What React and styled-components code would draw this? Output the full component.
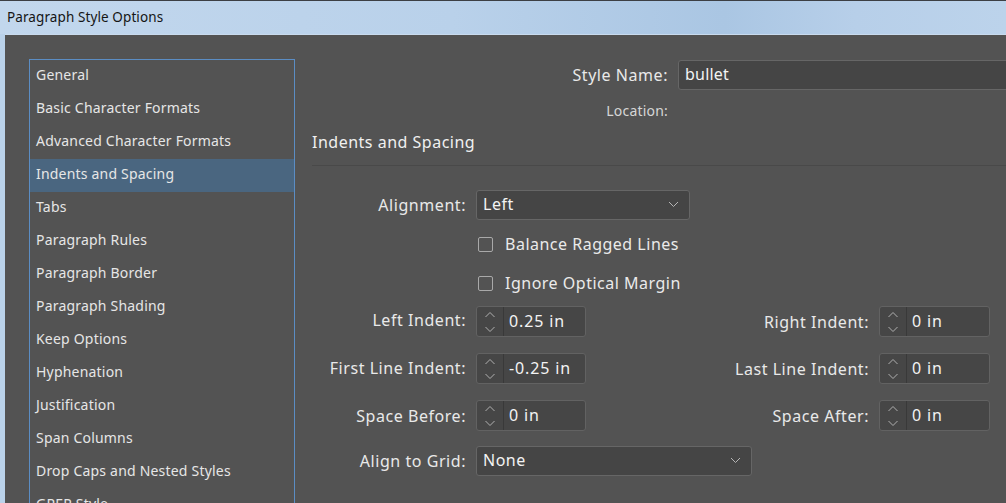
import React from 'react';
import styled, { createGlobalStyle } from 'styled-components';

const GlobalStyle = createGlobalStyle`
  html, body {
    margin: 0;
    padding: 0;
    background: #535353;
  }
  body {
    font-family: "Noto Sans", "DejaVu Sans", sans-serif;
    overflow: hidden;
  }
`;

const Window = styled.div`
  width: 1006px;
  height: 503px;
  display: flex;
  flex-direction: column;
  overflow: hidden;
`;

const TitleBar = styled.div`
  height: 34px;
  box-sizing: border-box;
  border-top: 1px solid #3c3f44;
  background: linear-gradient(90deg, #c2d7ed 0%, #b9d1ea 45%, #aac6e3 72%, #b7cfe9 85%, #bcd3eb 100%);
  display: flex;
  align-items: center;
  padding: 0 0 1px 7px;
  font-size: 13.5px;
  letter-spacing: 0.1px;
  color: #151515;
`;

const Frame = styled.div`
  flex: 1;
  display: flex;
  min-height: 0;
  padding-left: 5px;
  background: #bad2ea;
`;

const Body = styled.div`
  flex: 1;
  display: flex;
  gap: 17px;
  min-height: 0;
  padding: 24px 0 0 24px;
  background: #535353;
  border-top: 1px solid #c9dbee;
  overflow: hidden;
`;

const CategoryList = styled.ul`
  list-style: none;
  margin: 0;
  padding: 0;
  width: 266px;
  flex-shrink: 0;
  box-sizing: border-box;
  border: 1px solid #5b8dc4;
  border-bottom: none;
  overflow: hidden;
`;

const Category = styled.li`
  height: 33px;
  display: flex;
  align-items: center;
  padding: 0 0 4px 6px;
  box-sizing: border-box;
  font-size: 14px;
  letter-spacing: 0.2px;
  color: #e6e6e6;
  white-space: nowrap;
  background: ${(p) => (p.$active ? '#4a6680' : 'transparent')};
`;

const Panel = styled.div`
  flex: 1;
  min-width: 0;
  display: flex;
  flex-direction: column;
  padding-top: 1px;
  letter-spacing: 0.5px;
`;

const NameRow = styled.div`
  display: grid;
  grid-template-columns: 356px 1fr;
  column-gap: 10px;
  align-items: center;
  height: ${(p) => p.$height}px;
  margin-top: ${(p) => p.$top || 0}px;
`;

const Label = styled.span`
  text-align: right;
  font-size: ${(p) => p.$size || 16}px;
  letter-spacing: ${(p) => (p.$size ? 0.2 : 0.55)}px;
  color: ${(p) => (p.$dim ? '#d6d6d6' : '#e9e9e9')};
  white-space: nowrap;
  transform: translateY(${(p) => p.$shift || 0}px);
`;

const TextInput = styled.div`
  height: 30px;
  box-sizing: border-box;
  margin-right: -12px;
  display: flex;
  align-items: center;
  padding: 0 6px 2px;
  background: #454545;
  border: 1px solid #666;
  border-radius: 3px;
  font-size: 16px;
  letter-spacing: 0.2px;
  color: #f3f3f3;
`;

const SectionTitle = styled.div`
  margin-top: 10px;
  font-size: 16px;
  line-height: 22px;
  color: #f0f0f0;
`;

const Divider = styled.div`
  margin-top: 12px;
  height: 1px;
  background: #494949;
`;

const Form = styled.div`
  display: flex;
  flex-direction: column;
  margin-top: 24px;
`;

const Row = styled.div`
  display: grid;
  grid-template-columns: 154px 110px 273px 111px;
  column-gap: 10px;
  align-items: center;
  height: ${(p) => p.$height || 30}px;
  margin-top: ${(p) => p.$top || 0}px;
`;

const Select = styled.div`
  grid-column: 2 / 5;
  width: ${(p) => p.$width}px;
  height: 30px;
  box-sizing: border-box;
  display: flex;
  align-items: center;
  justify-content: space-between;
  padding: 0 10px 2px 6px;
  background: #454545;
  border: 1px solid #666;
  border-radius: 3px;
  font-size: 16px;
  color: #f3f3f3;
`;

const CheckRow = styled.label`
  grid-column: 2 / 5;
  display: flex;
  align-items: center;
  gap: 12px;
  padding-left: 2px;
  font-size: 16px;
  color: #eaeaea;
`;

const Box = styled.span`
  width: 15px;
  height: 15px;
  box-sizing: border-box;
  border: 1px solid #a9a9a9;
  border-radius: 2px;
`;

const Spinner = styled.div`
  height: 31px;
  box-sizing: border-box;
  display: flex;
  background: #464646;
  border: 1px solid #626262;
  border-radius: 3px;
`;

const Arrows = styled.div`
  width: 26px;
  flex-shrink: 0;
  display: flex;
  align-items: center;
  justify-content: center;
  border-right: 1px solid #393939;
`;

const Value = styled.div`
  flex: 1;
  display: flex;
  align-items: center;
  padding: 0 0 1px 5px;
  font-size: 16px;
  letter-spacing: 0.85px;
  color: #f3f3f3;
`;

const Chevron = () => (
  <svg width="11" height="7" viewBox="0 0 11 7">
    <path d="M1 1l4.5 4.5L10 1" fill="none" stroke="#b5b5b5" strokeWidth="1" />
  </svg>
);

const UpDown = () => (
  <svg width="12" height="22" viewBox="0 0 12 22">
    <path d="M1.5 6L6 1.5L10.5 6" fill="none" stroke="#b0b0b0" strokeWidth="1" />
    <path d="M1.5 16L6 20.5L10.5 16" fill="none" stroke="#b0b0b0" strokeWidth="1" />
  </svg>
);

const Field = ({ value }) => (
  <Spinner>
    <Arrows><UpDown /></Arrows>
    <Value>{value}</Value>
  </Spinner>
);

const categories = [
  'General',
  'Basic Character Formats',
  'Advanced Character Formats',
  'Indents and Spacing',
  'Tabs',
  'Paragraph Rules',
  'Paragraph Border',
  'Paragraph Shading',
  'Keep Options',
  'Hyphenation',
  'Justification',
  'Span Columns',
  'Drop Caps and Nested Styles',
  'GREP Style',
  'Bullets and Numbering',
];

const App = () => (
  <>
    <GlobalStyle />
    <Window>
      <TitleBar>Paragraph Style Options</TitleBar>
      <Frame>
        <Body>
          <CategoryList>
            {categories.map((name) => (
              <Category key={name} $active={name === 'Indents and Spacing'}>
                {name}
              </Category>
            ))}
          </CategoryList>

          <Panel>
            <NameRow $height={30}>
              <Label>Style Name:</Label>
              <TextInput>bullet</TextInput>
            </NameRow>
            <NameRow $height={20} $top={11}>
              <Label $size={14} $dim $shift={-1}>Location:</Label>
            </NameRow>

            <SectionTitle>Indents and Spacing</SectionTitle>
            <Divider />

            <Form>
              <Row>
                <Label>Alignment:</Label>
                <Select $width={214}>
                  Left
                  <Chevron />
                </Select>
              </Row>
              <Row $top={9}>
                <span />
                <CheckRow><Box />Balance Ragged Lines</CheckRow>
              </Row>
              <Row $top={9}>
                <span />
                <CheckRow><Box />Ignore Optical Margin</CheckRow>
              </Row>
              <Row $top={8} $height={31}>
                <Label $shift={-2}>Left Indent:</Label>
                <Field value="0.25 in" />
                <Label>Right Indent:</Label>
                <Field value="0 in" />
              </Row>
              <Row $top={16} $height={31}>
                <Label $shift={-1}>First Line Indent:</Label>
                <Field value="-0.25 in" />
                <Label>Last Line Indent:</Label>
                <Field value="0 in" />
              </Row>
              <Row $top={16} $height={31}>
                <Label>Space Before:</Label>
                <Field value="0 in" />
                <Label>Space After:</Label>
                <Field value="0 in" />
              </Row>
              <Row $top={15}>
                <Label>Align to Grid:</Label>
                <Select $width={276}>
                  None
                  <Chevron />
                </Select>
              </Row>
            </Form>
          </Panel>
        </Body>
      </Frame>
    </Window>
  </>
);

export default App;
